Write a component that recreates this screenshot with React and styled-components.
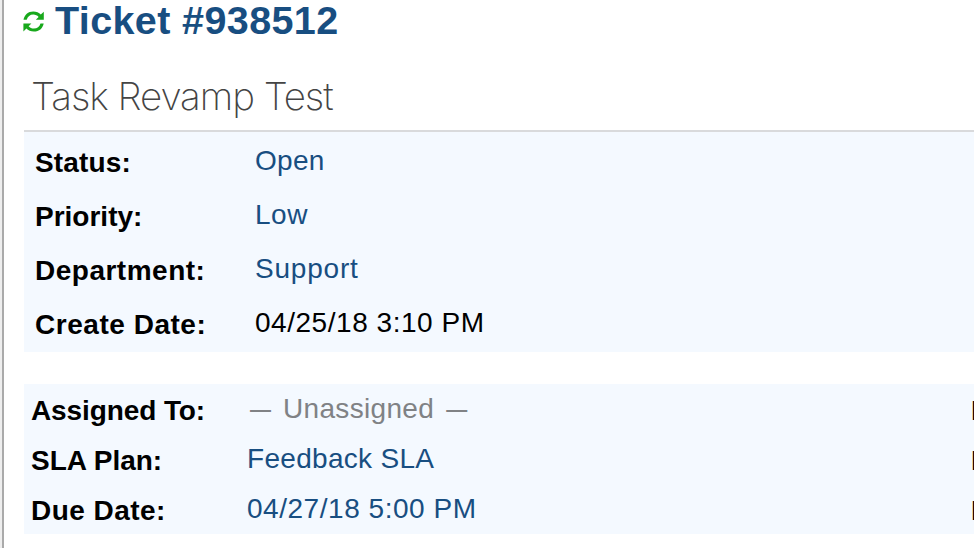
import React from "react";
import styled, { createGlobalStyle } from "styled-components";

const GlobalStyle = createGlobalStyle`
  body {
    margin: 0;
    overflow: hidden;
    background: #fff;
    font-family: "Liberation Sans", Arial, sans-serif;
  }
`;

const Page = styled.main`
  box-sizing: border-box;
  width: 974px;
  height: 548px;
  overflow: hidden;
  padding-left: 20px;
  border-left: 2px solid #aaa;
  background: #fff;
`;

const Gutter = styled.div`
  width: 974px;
  box-sizing: border-box;
  padding-left: 2px;
  overflow: hidden;
  background: #eee;
`;

const TitleBar = styled.header`
  display: flex;
  height: 75px;
`;

const RefreshIcon = styled.svg`
  width: 21px;
  height: 21px;
  margin: 11px 11px 0 -1px;
  fill: #18a81c;
`;

const Title = styled.h1`
  margin: 0;
  font-size: 39.5px;
  line-height: 40px;
  letter-spacing: 0.38px;
  color: #184e81;
  white-space: nowrap;
`;

const Subject = styled.h2`
  box-sizing: border-box;
  height: 57px;
  margin: 0;
  padding-left: 7px;
  border-bottom: 2px solid #d9dadc;
  font-family: Inter, sans-serif;
  font-size: 38.5px;
  font-weight: 200;
  line-height: 42px;
  letter-spacing: -1.05px;
  color: #444;
`;

const Details = styled.section`
  box-sizing: border-box;
  height: ${(p) => p.$height}px;
  margin-bottom: 32px;
  padding-left: ${(p) => p.$inset}px;
  overflow: hidden;
  background: #f4f9ff;
`;

const Row = styled.div`
  display: grid;
  grid-template-columns: ${(p) => p.$columns};
  height: ${(p) => p.$height}px;
  padding-top: ${(p) => p.$top || 0}px;
  box-sizing: border-box;
  font-size: 28px;
  line-height: 32px;
  white-space: nowrap;
`;

const Label = styled.span`
  padding-top: 2px;
  font-weight: 700;
  letter-spacing: ${(p) => p.$track || 0}px;
`;

const Value = styled.span`
  letter-spacing: ${(p) => p.$track || 0}px;
  color: ${(p) => p.$color || "#184e81"};
`;

const Placeholder = styled.span`
  display: flex;
  gap: 12px;
  padding-left: 3px;
  letter-spacing: 0.33px;
  color: #808285;
`;

const Dash = styled.span`
  width: 21px;
  font-size: 21px;
  font-weight: 700;
  line-height: 32px;
  letter-spacing: 0;
`;

const summary = [
  { label: "Status:", labelTrack: 0.15, value: "Open", track: 0.3 },
  { label: "Priority:", value: "Low", track: 0.5 },
  { label: "Department:", labelTrack: 0.5, value: "Support", track: 0.8 },
  { label: "Create Date:", labelTrack: 0.53, value: "04/25/18 3:10 PM", track: 0.53, color: "#000" },
];

const assignment = [
  { label: "Assigned To:", labelTrack: -0.1, placeholder: "Unassigned", next: "Help Topic:" },
  { label: "SLA Plan:", value: "Feedback SLA", track: 0.3, next: "Last Message:" },
  { label: "Due Date:", labelTrack: 0.45, value: "04/27/18 5:00 PM", track: 0.53, next: "Last Response:" },
];

const ARROW =
  "M.5 8.8C1.5 4 5 .6 10.3 .6c3.1 0 5.7 1.2 7.5 3L20.8 .8v8h-8l2.8-2.9C14.2 4.5 12.4 3.6 10.3 3.6 7 3.6 4.7 5.6 3.7 8.8z";

export default function App() {
  return (
    <Gutter>
      <GlobalStyle />
      <Page>
        <TitleBar>
          <RefreshIcon viewBox="0 0 21 21" aria-label="Refresh">
            <path d={ARROW} />
            <path d={ARROW} transform="rotate(180 10.6 10.6)" />
          </RefreshIcon>
          <Title>Ticket #938512</Title>
        </TitleBar>
        <Subject>Task Revamp Test</Subject>
        <Details $height={220} $inset={11}>
          {summary.map((r) => (
            <Row key={r.label} $height={54} $top={13} $columns="220px 1fr">
              <Label $track={r.labelTrack}>{r.label}</Label>
              <Value $color={r.color} $track={r.track}>{r.value}</Value>
            </Row>
          ))}
        </Details>
        <Details $height={150} $inset={7}>
          {assignment.map((r) => (
            <Row key={r.label} $height={50} $top={9} $columns="216px 724px 200px">
              <Label $track={r.labelTrack}>{r.label}</Label>
              {r.placeholder ? (
                <Placeholder>
                  <Dash>—</Dash>
                  {r.placeholder}
                  <Dash>—</Dash>
                </Placeholder>
              ) : (
                <Value $track={r.track}>{r.value}</Value>
              )}
              <Label>{r.next}</Label>
            </Row>
          ))}
        </Details>
      </Page>
    </Gutter>
  );
}
